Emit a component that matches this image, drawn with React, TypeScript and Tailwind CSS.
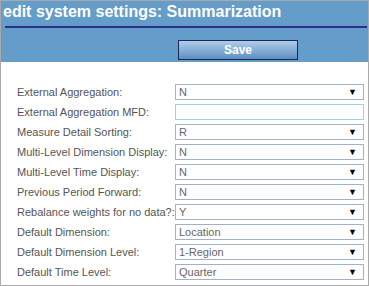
import React from 'react';

interface Setting {
  label: string;
  value: string;
  kind: 'select' | 'input';
}

const settings: Setting[] = [
  { label: 'External Aggregation:', value: 'N', kind: 'select' },
  { label: 'External Aggregation MFD:', value: '', kind: 'input' },
  { label: 'Measure Detail Sorting:', value: 'R', kind: 'select' },
  { label: 'Multi-Level Dimension Display:', value: 'N', kind: 'select' },
  { label: 'Multi-Level Time Display:', value: 'N', kind: 'select' },
  { label: 'Previous Period Forward:', value: 'N', kind: 'select' },
  { label: 'Rebalance weights for no data?:', value: 'Y', kind: 'select' },
  { label: 'Default Dimension:', value: 'Location', kind: 'select' },
  { label: 'Default Dimension Level:', value: '1-Region', kind: 'select' },
  { label: 'Default Time Level:', value: 'Quarter', kind: 'select' },
];

export default function App() {
  return (
    <div className="w-[369px] h-[286px] border border-[#a9a9a9] bg-white font-['Liberation_Sans',Arial,sans-serif] overflow-hidden">
      {/* Header */}
      <div className="bg-[#649cca] h-[61px] pl-[2px] pr-[1px] pt-[1px]">
        <h1 className="text-[16px] leading-[20px] font-bold text-white h-[24px]">
          edit system settings: Summarization
        </h1>
        <div className="ml-[2px] h-[2px] bg-[#2e2f8c]" />
        <div className="pl-[175px] pt-[9px]">
          <button className="w-[120px] h-[20px] border border-[#1f2758] bg-gradient-to-b from-[#b0cdea] to-[#5d8fc2] text-white text-[12px] font-bold leading-[18px]">
            Save
          </button>
        </div>
      </div>

      {/* Form */}
      <div className="pt-[22px] flex flex-col gap-[4px]">
        {settings.map((s) => (
          <div key={s.label} className="flex items-center h-[16px]">
            <span className="w-[174px] pl-[16px] text-[11px] text-[#555555] whitespace-nowrap leading-[16px]">
              {s.label}
            </span>
            {s.kind === 'select' ? (
              <div className="w-[189px] h-[16px] border border-[#a3b1c8] flex items-center justify-between pl-[3px] pr-[6px]">
                <span className="text-[11px] text-[#666666] leading-[14px]">{s.value}</span>
                <span className="text-[9px] text-black leading-[14px]">▼</span>
              </div>
            ) : (
              <div className="w-[189px] h-[16px] border border-[#9fd0e3]" />
            )}
          </div>
        ))}
      </div>
    </div>
  );
}
